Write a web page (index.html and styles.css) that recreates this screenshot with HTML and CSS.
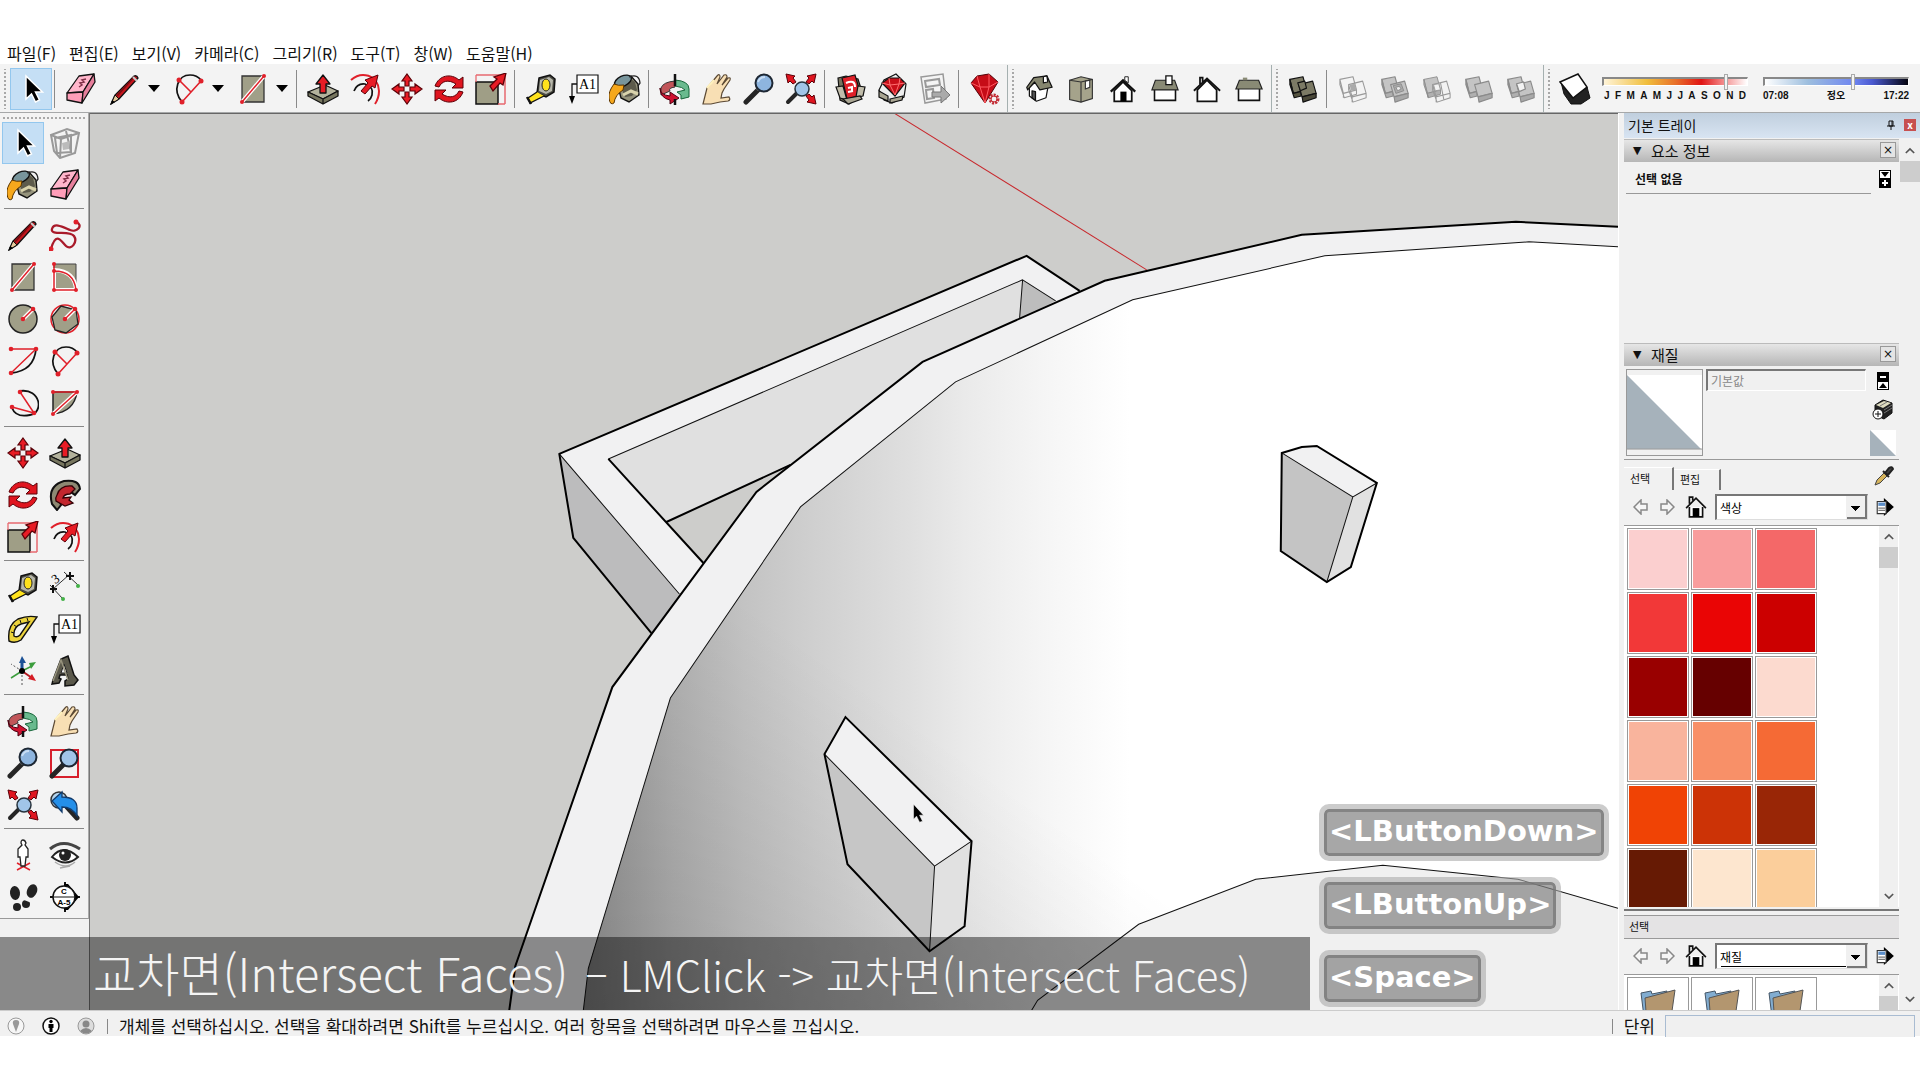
FILE: index.html
```html
<!DOCTYPE html>
<html lang="ko">
<head>
    <meta charset="UTF-8">
    <meta name="viewport" content="width=device-width, initial-scale=1.0">
    <title>SketchUp</title>
    <link rel="stylesheet" href="styles.css">
</head>
<body>
    <!-- icon set -->
    <svg class="sprite" aria-hidden="true">
        <symbol id="i-select" viewBox="0 0 32 32"><path d="M11 3v23l5.500-5 4 8 4-2-4-8h7z" fill="#000" stroke="#fff" stroke-width="1.500"/></symbol>
        <symbol id="i-eraser" viewBox="0 0 32 32"><g stroke="#111" stroke-width="1.300" stroke-linejoin="round"><path d="M2 20 14 3l15-2-11 18z" fill="#ffb6cb"/><path d="m2 20 16-1-1 11-15-3z" fill="#ff9db8"/><path d="m18 19 11-18 1 8-13 21z" fill="#e77f9c"/></g><path d="m14 14 3-2-2-2 4-1-2-2 4-1" fill="none" stroke="#803048" stroke-width="1.500"/></symbol>
        <symbol id="i-pencil" viewBox="0 0 32 32"><path d="M25 3q3-1 4 2L10 26l-8 5 4-9z" fill="#c5161d" stroke="#111" stroke-width="1.300"/><path d="m6 22 4 4-8 5z" fill="#e5c99b" stroke="#111"/><path d="m2 31 1-4 3 2z"/><path d="m8 23 17-19" stroke="#7b0b10" stroke-width="1.500"/><path d="m24 4 4 4" stroke="#ccc" stroke-width="2"/></symbol>
        <symbol id="i-arc2" viewBox="0 0 32 32"><path d="M9 29C-1 17 5 2 17 2q7 0 11 5" fill="none" stroke="#111" stroke-width="1.700"/><path d="M9 29 28 8M6 7l12 12" stroke="#e0202a" stroke-width="1.600"/><g fill="#e0202a"><circle cx="9" cy="29" r="2.500"/><circle cx="28" cy="8" r="2.500"/><circle cx="6" cy="7" r="2.500"/></g></symbol>
        <symbol id="i-rect" viewBox="0 0 32 32"><path d="M5 3h22v26H5z" fill="#a09f88" stroke="#333" stroke-width="1.300"/><path d="M5 29 27 3" stroke="#fff" stroke-width="4"/><path d="M5 29 27 3" stroke="#e0202a" stroke-width="1.500"/><circle cx="5" cy="29" r="2" fill="#e0202a"/><circle cx="27" cy="3" r="2" fill="#e0202a"/></symbol>
        <symbol id="i-push" viewBox="0 0 32 32"><g stroke="#111" stroke-width="1.300" stroke-linejoin="round"><path d="m1 19 17-7 13 6-15 8z" fill="#b3b29c"/><path d="m1 19 15 7v5L1 23zM16 26l15-8v5l-15 8z" fill="#77765f"/><path d="M13 20v-9H9l7-9 7 9h-4v9z" fill="#e81c25"/></g></symbol>
        <symbol id="i-offset" viewBox="0 0 32 32"><path d="M2 7C12-2 29 1 30 18q0 7-4 13" fill="none" stroke="#e0202a" stroke-width="2"/><path d="M5 18q3-8 11-7 9 3 7 11-1 4-4 6" fill="none" stroke="#111" stroke-width="1.700"/><path d="m12 18 7-8-3-3 13-5-3 13-3-2-7 8z" fill="#e81c25" stroke="#5b0007"/></symbol>
        <symbol id="i-move" viewBox="0 0 32 32"><g fill="#e81c25" stroke="#5b0007" stroke-width="1.200"><path id="mv" d="m16 1 5 7h-3v5h-4V8h-3z"/><use href="#mv" transform="rotate(90 16 16)"/><use href="#mv" transform="rotate(180 16 16)"/><use href="#mv" transform="rotate(270 16 16)"/></g></symbol>
        <symbol id="i-rotate" viewBox="0 0 32 32"><g fill="#e0151f" stroke="#5b0007"><path id="rt" d="M2 13C6 2 18 0 26 7l4-3v11H19l4-4C15 6 9 8 6 14z"/><use href="#rt" transform="rotate(180 16 16)"/></g></symbol>
        <symbol id="i-scale" viewBox="0 0 32 32"><path d="M1 2h29v29" fill="none" stroke="#e86a70" stroke-width="1.500"/><path d="M1 9h22v22H1z" fill="#9f9e86" stroke="#111" stroke-width="1.500"/><path d="M1 9V2M23 31h7" stroke="#e86a70" stroke-width="1.300"/><path d="m15 13 7-7-3-2 12-4-3 12-3-2-7 8z" fill="#e81c25" stroke="#5b0007" stroke-width="1.300"/></symbol>
        <symbol id="i-tape" viewBox="0 0 32 32"><path d="m14 5 11-3 5 4-1 13-8 5-9-4z" fill="#4a4a43" stroke="#111" stroke-width="1.500"/><path d="m15 7 9-3 4 3-1 11-6 3-7-3z" fill="#b7b7aa"/><ellipse cx="21" cy="12" rx="4" ry="6" fill="#ffe21c" stroke="#222"/><path d="m12 19-9 6 2 5 14-7" fill="#ffe21c" stroke="#111" stroke-width="1.300"/><path d="m2 24 4 7" stroke="#111" stroke-width="2.500"/></symbol>
        <symbol id="i-text" viewBox="0 0 32 32"><path d="M10 2h21v18H10z" fill="#fff" stroke="#111" stroke-width="1.200"/><text x="20.500" y="16" text-anchor="middle" class="glyph-a1">A1</text><path d="M10 11H5v16" fill="none" stroke="#111" stroke-width="1.300"/><path d="M2 23h6l-3 8z"/></symbol>
        <symbol id="i-paint" viewBox="0 0 32 32"><path d="m8 9 14-6 7 8 1 11-10 7-8-4z" fill="#95937c" stroke="#111" stroke-width="1.400"/><path d="m11 12 10-7 5 4 2 8-5 6-7 1z" fill="#5d5b4c"/><ellipse cx="14" cy="8" rx="9" ry="5" transform="rotate(-25 14 8)" fill="#78959c" stroke="#111" stroke-width="1.400"/><path d="M20 4q10-4 11 6l-2 3" fill="none" stroke="#222" stroke-width="1.300"/><path d="M5 11q-6 8-5 14 1 8 5 5 1-8 9-13l1-5q-6 1-10-1z" fill="#f6a81c" stroke="#5b3500"/><path d="m14 22 8-4 7 3" fill="none" stroke="#d9d3ac" stroke-width="3"/></symbol>
        <symbol id="i-orbit" viewBox="0 0 32 32"><path d="M16 8Q4 9 2 15v7l9-4q-2-3 5-4z" fill="#c15559" stroke="#333"/><path d="M16 7q14 1 14 9v8l-8 2v-4l-4-3 8-2q-2-3-10-4z" fill="#69ba8e" stroke="#17663a"/><path d="M1 15q0 7 10 8v-4l9 6-9 6v-4Q1 25 1 15z" fill="#cf1230" stroke="#4d0010"/><path d="M16 1v12m0 13v6" stroke="#111" stroke-width="2.500"/></symbol>
        <symbol id="i-pan" viewBox="0 0 32 32"><path d="m2 31 4-16L16 3q3-3 3 1l-3 7 7-9q3-1 3 2l-5 8 6-7q3-1 2 2l-6 9-2 4-1 5 8-1q2 3-1 4l-8 1-9 2z" fill="#f8dfb4" stroke="#5b4934" stroke-width="1.200"/><path d="m6 15 7-8" stroke="#fff1bd" stroke-width="2"/></symbol>
        <symbol id="i-zoom" viewBox="0 0 32 32"><path d="M15 17 3 29" stroke="#252525" stroke-width="5" stroke-linecap="round"/><path d="m14 17 3-3" stroke="#777" stroke-width="3"/><circle cx="21" cy="10" r="8.500" fill="#8eb5df" stroke="#1d2733" stroke-width="2"/><path d="M15 9q2-5 7-5" fill="none" stroke="#c8ddf4" stroke-width="2"/></symbol>
        <symbol id="i-extents" viewBox="0 0 32 32"><path d="m12 20-9 9" stroke="#252525" stroke-width="4" stroke-linecap="round"/><circle cx="17" cy="16" r="7" fill="#a1c5e8" stroke="#26323c" stroke-width="1.500"/><g fill="#e0151f" stroke="#5b0007"><path id="ex" d="m1 1 9 2-2 2 3 4-3 2-3-3-2 2z"/><use href="#ex" transform="matrix(-1 0 0 1 32 0)"/><use href="#ex" transform="rotate(180 16 16)"/></g></symbol>
        <symbol id="i-ware" viewBox="0 0 32 32"><g stroke="#111" stroke-width="1.200"><path d="m3 5 8-2 12 3 5 16-14 9-9-4z" fill="#77745f"/><path d="m7 5 13-3 6 20-14 4z" fill="#df2029"/><path d="m1 14 7-1 4 14-7-2zM23 13l7 1-2 9-7 1z" fill="#c1bdab"/><path d="m8 26 17-3 2 3-14 5z" fill="#a9a592"/></g><path d="M11 10q9-4 9 4M13 15l4-1v4m-4 1 5-1" fill="none" stroke="#fff" stroke-width="2"/></symbol>
        <symbol id="i-extware" viewBox="0 0 32 32"><g stroke="#111" stroke-width="1.200"><path d="m2 17 5-10 12-6 10 10-2 13-12 6-8-3z" fill="#eee"/><path d="m2 18 9 5v5l-9-4zM13 26l13-3-1 4-12 3z" fill="#a9a592"/><path d="m5 10 7-5h11l5 5-10 13z" fill="#c90f19"/></g><path d="m5 10 8 2 5 10 4-11 6-1M12 5l1 7 9-1 1-6" fill="none" stroke="#ff6e70"/></symbol>
        <symbol id="i-layout" viewBox="0 0 32 32"><path d="m2 4 22-3 3 25-21 4z" fill="#f4f4f4" stroke="#999" stroke-width="1.500"/><path d="m6 8 14-2 1 6-14 2zM7 17l7-1 1 9-7 1z" fill="none" stroke="#999" stroke-width="2"/><path d="M13 19h9v-6l9 9-9 8v-6h-9z" fill="#aaa" stroke="#777"/></symbol>
        <symbol id="i-ruby" viewBox="0 0 32 32"><path d="m2 10 6-7 12-2 9 8-13 21z" fill="#c60c17" stroke="#520006"/><path d="m2 10 9 4 5 16 4-16 9-5M8 3l3 11 9 0V1" fill="none" stroke="#ff5b62"/><circle cx="25" cy="26" r="4" fill="#f3f3f3" stroke="#c32d35" stroke-width="3" stroke-dasharray="2 1"/><circle cx="25" cy="26" r="3" fill="none" stroke="#c32d35"/></symbol>
        <symbol id="i-iso" viewBox="0 0 32 32"><g stroke="#111" stroke-width="1.400" stroke-linejoin="round"><path d="m5 14 10-9 11 10-2 11-11 4-8-6z" fill="#fff"/><path d="m2 14 8-11 15-2 6 13-14 3-6-9-8 9z" fill="#86866f"/><path d="m8 18 4 1v10l-4-3z" fill="#555"/><path d="m21 2 4-1 1 7-5 1z" fill="#fff"/></g></symbol>
        <symbol id="i-top" viewBox="0 0 32 32"><g stroke="#333" stroke-width="1.300"><path d="m3 6 13-4 13 3v22l-13 4-13-3z" fill="#a5a38b"/><path d="M16 8v23M3 6l13 2 13-3" fill="none"/><path d="m21 7 5-1v8l-5 2z" fill="#fff"/></g></symbol>
        <symbol id="i-front" viewBox="0 0 32 32"><path d="M6 18v12h20V18L16 8z" fill="#fff" stroke="#111" stroke-width="2"/><path d="M2 19 16 6l14 13" fill="none" stroke="#111" stroke-width="2.500"/><path d="M13 19h7v11h-7z"/><path d="M18 2h4v7l-4-3z" fill="#fff" stroke="#111"/></symbol>
        <symbol id="i-right" viewBox="0 0 32 32"><path d="M4 15h24v14H4z" fill="#fff" stroke="#111" stroke-width="1.800"/><path d="m5 6 22 0 4 11H1z" fill="#898a75" stroke="#222" stroke-width="1.300"/><path d="M17 1h7v10h-7z" fill="#fff" stroke="#111" stroke-width="1.500"/></symbol>
        <symbol id="i-back" viewBox="0 0 32 32"><path d="M5 17v13h22V17L16 6z" fill="#fff" stroke="#111" stroke-width="2"/><path d="M1 18 16 4l15 14M8 11V3h3v5" fill="none" stroke="#111" stroke-width="2"/></symbol>
        <symbol id="i-left" viewBox="0 0 32 32"><path d="M4 15h24v14H4z" fill="#fff" stroke="#111" stroke-width="1.800"/><path d="m5 6 22 0 4 10H1z" fill="#898a75" stroke="#222" stroke-width="1.300"/><path d="M9 3h5v3H9z" fill="#898a75"/></symbol>
        <symbol id="i-shell" viewBox="0 0 32 32"><g fill="#7c7a65" stroke="#111" stroke-width="1.300" stroke-linejoin="round"><path d="m1 5 15-3 4 15-15 4z"/><path d="m5 21 8-2 1 5-8 2-5-15V5z" fill="#55533f"/><path d="m11 11 16-4 4 14-16 4z"/><path d="m15 25 16-4v5l-15 5z" fill="#4a4838"/><path d="m10 9 8-2 2 8-7 3z"/></g></symbol>
        <symbol id="i-solid" viewBox="0 0 32 32"><g fill="#c4c4c4" stroke="#8b8b8b" stroke-width="1.300" stroke-linejoin="round"><path d="m1 5 15-3 4 15-15 4z"/><path d="m5 21 8-2 1 5-8 2-5-15V5z" fill="#b0b0b0"/><path d="m11 11 16-4 4 14-16 4z"/><path d="m15 25 16-4v5l-15 5z" fill="#a8a8a8"/></g></symbol>
        <symbol id="i-union" viewBox="0 0 32 32"><use href="#i-solid"/><path d="m14 12 9-2 3 8-9 3z" fill="#aaa" stroke="#888"/><path d="m17 14 4-1 2 3-4 2z" fill="#eee" stroke="#888"/></symbol>
        <symbol id="i-split" viewBox="0 0 32 32"><use href="#i-solid"/><path d="m11 10 8-2 2 8-7 3z" fill="#f3f3f3" stroke="#888" stroke-width="1.300"/></symbol>
        <symbol id="i-wire" viewBox="0 0 32 32"><g fill="none" stroke="#999" stroke-width="1.200" stroke-linejoin="round"><path d="m1 5 15-3 4 15-15 4zM1 5v6l5 15 14-4v-5M5 21v5"/><path d="m11 11 16-4 4 14-16 4zM11 11v6l5 14 15-5v-5M15 25v6"/></g><path d="m12 11 6-1 2 7-6 1z" fill="#aaa"/></symbol>
        <symbol id="i-cut" viewBox="0 0 32 32"><path d="m1 5 15-3 4 15-15 4z" fill="#c4c4c4" stroke="#8b8b8b"/><path d="m1 5 4 16 1 5-5-15zM6 26l14-4v-5L5 21z" fill="#b0b0b0" stroke="#8b8b8b"/><path d="m11 11 16-4 4 14-16 4zM11 11v6l5 14 15-5v-5M15 25v6M20 9l4 20" fill="none" stroke="#999" stroke-width="1.200"/><path d="m12 11 6-1 2 7-6 1z" fill="#f3f3f3" stroke="#999"/></symbol>
        <symbol id="i-shadow" viewBox="0 0 32 32"><path d="m2 9 3 12 7 10h10l9-6-3-11-17-6z" fill="#222" stroke="#111"/><path d="m1 9 18-8 9 13-14 11z" fill="#fff" stroke="#111" stroke-width="1.500"/></symbol>
        <symbol id="i-component" viewBox="0 0 32 32"><g fill="none" stroke="#999" stroke-width="2"><path d="m2 8 16-6 12 4-4 20-15 5-6-7z"/><path d="m2 8 10 4 18-6M12 12l-1 19M6 11l16-3 0 17-14 1zM17 4l5 21"/></g><path d="m13 16 8-2-1 8-6 1z" fill="#bbb"/></symbol>
        <symbol id="i-free" viewBox="0 0 32 32"><path d="M27 3c8 3 1 11-6 8S5 3 3 10s18 1 22 7-3 15-8 10S7 12 2 30" fill="none" stroke="#a91b2a" stroke-width="2.300"/><circle cx="27" cy="3" r="2.500" fill="#e0202a"/><circle cx="2" cy="30" r="2.500" fill="#e0202a"/></symbol>
        <symbol id="i-rrect" viewBox="0 0 32 32"><path d="M5 3h22v26H5z" fill="#a09f88" stroke="#444"/><path d="M5 9q21 1 22 20H5z" fill="none" stroke="#fff" stroke-width="4"/><path d="M5 3v26h22Q25 10 5 10" fill="none" stroke="#e0202a" stroke-width="1.500"/><g fill="#e0202a"><circle cx="5" cy="3" r="2"/><circle cx="5" cy="10" r="2"/><circle cx="5" cy="29" r="2"/><circle cx="27" cy="29" r="2"/></g></symbol>
        <symbol id="i-circle" viewBox="0 0 32 32"><circle cx="16" cy="16" r="14" fill="#a09f88" stroke="#222" stroke-width="1.500"/><path d="M16 16 26 6" stroke="#fff" stroke-width="4"/><path d="M16 16 26 6" stroke="#e0202a" stroke-width="1.500"/><circle cx="16" cy="16" r="2.300" fill="#e0202a"/><circle cx="26" cy="6" r="2.300" fill="#e0202a"/></symbol>
        <symbol id="i-poly" viewBox="0 0 32 32"><circle cx="16" cy="16" r="14" fill="none" stroke="#e0202a" stroke-width="1.500"/><path d="M3 14 12 3l15 4 2 14-12 9-11-3z" fill="#a09f88" stroke="#222" stroke-width="1.300"/><path d="M16 16 26 6" stroke="#fff" stroke-width="4"/><path d="M16 16 26 6" stroke="#e0202a" stroke-width="1.500"/><circle cx="16" cy="16" r="2.300" fill="#e0202a"/><circle cx="26" cy="6" r="2.300" fill="#e0202a"/></symbol>
        <symbol id="i-arc1" viewBox="0 0 32 32"><path d="M29 4q-2 22-25 24" fill="none" stroke="#111" stroke-width="1.800"/><path d="M4 4h25L4 28" fill="none" stroke="#e0202a" stroke-width="1.500"/><g fill="#e0202a"><circle cx="4" cy="4" r="2.300"/><circle cx="29" cy="4" r="2.300"/><circle cx="4" cy="28" r="2.300"/></g></symbol>
        <symbol id="i-arc3" viewBox="0 0 32 32"><path d="M13 4c21-3 24 22 10 24Q9 31 5 21" fill="none" stroke="#111" stroke-width="1.800"/><path d="m13 5 14 21-22-6" fill="none" stroke="#e0202a" stroke-width="1.500"/><g fill="#e0202a"><circle cx="13" cy="5" r="2.300"/><circle cx="27" cy="26" r="2.300"/><circle cx="5" cy="20" r="2.300"/></g></symbol>
        <symbol id="i-pie" viewBox="0 0 32 32"><path d="M4 5h24q-3 20-24 22z" fill="#a09f88" stroke="#222" stroke-width="1.500"/><path d="m4 27 24-22" stroke="#fff" stroke-width="4"/><path d="m4 27 24-22H4" fill="none" stroke="#e0202a" stroke-width="1.500"/><g fill="#e0202a"><circle cx="4" cy="5" r="2"/><circle cx="28" cy="5" r="2"/><circle cx="4" cy="27" r="2"/></g></symbol>
        <symbol id="i-follow" viewBox="0 0 32 32"><path d="M3 25Q-2 7 15 2q15-2 16 8l-5 6q-5-5-11-2-6 4-3 12l-4 5z" fill="#8d8973" stroke="#111" stroke-width="2"/><path d="M8 16Q11 6 23 7l3 3-5 5q-6 0-7 4l8-1-2 3 4 3-8 3-9-5q-1-3 1-6z" fill="#c3262e" stroke="#330005" stroke-width="1.300"/></symbol>
        <symbol id="i-dim" viewBox="0 0 32 32"><path d="m4 18 17-15M1 14l13 14M15 1l14 13" stroke="#333"/><path d="m1 18 7 0M4 14v8M17 5h8M21 1v8" stroke="#111" stroke-width="2"/><circle cx="14" cy="28" r="2" fill="#43b247"/><circle cx="29" cy="15" r="2" fill="#43b247"/><text x="3" y="11" transform="rotate(-35 8 7)" class="glyph-3">3</text></symbol>
        <symbol id="i-protractor" viewBox="0 0 32 32"><path fill-rule="evenodd" d="M2 28Q0 12 11 6q10-4 19-2L14 27Q8 31 2 28zM7 23q-1-9 7-12l8-2-9 13q-3 3-6 1z" fill="#ecd33c" stroke="#111" stroke-width="1.400"/><path d="M4 19l3 1M7 12l3 2M13 7l1 3M20 5l1 3" stroke="#111"/></symbol>
        <symbol id="i-axes" viewBox="0 0 32 32"><path d="M15 16v14M15 16 4 9" stroke="#555" stroke-dasharray="2 2"/><path d="M15 16V6" stroke="#1b5196" stroke-width="3"/><path d="m12 8 3-7 4 7z" fill="#1b5196"/><path d="m15 16 10-5M15 16 4 23" stroke="#3b9d3d" stroke-width="1.500"/><path d="m22 8 7-1-5 7z" fill="#3b9d3d"/><path d="m15 16 10 7" stroke="#b51922" stroke-width="2"/><path d="m25 19 4 7-8-2z" fill="#d51c24"/><circle cx="15" cy="16" r="3"/></symbol>
        <symbol id="i-3dtext" viewBox="0 0 32 32"><path d="M4 25 12 4l7-3 6 19 4 5-4 5-9 1v-5l3-2-1-4h-7l-1 3 2 1-2 4-7 1z" fill="#5a584b" stroke="#111" stroke-width="1.500"/><path d="m12 18 3-9 3 9z" fill="#eee" stroke="#222"/><path d="m4 26 8-21 7 20" fill="none" stroke="#98947e" stroke-width="1.500"/></symbol>
        <symbol id="i-zoomwin" viewBox="0 0 32 32"><path d="M2 3h27v27H2z" fill="none" stroke="#d7202c" stroke-width="2"/><path d="M15 17 3 29" stroke="#252525" stroke-width="5" stroke-linecap="round"/><circle cx="20" cy="11" r="8.500" fill="#a1c5e8" stroke="#1d2733" stroke-width="2"/></symbol>
        <symbol id="i-prev" viewBox="0 0 32 32"><path d="m18 18 10 11" stroke="#252525" stroke-width="5" stroke-linecap="round"/><circle cx="10" cy="11" r="8" fill="#b5d5ee" stroke="#333" stroke-width="1.500"/><path d="m3 12 10-9v5q15 0 15 11v8q-5-9-15-9v5z" fill="#248fe9" stroke="#123b6c" stroke-width="1.300"/></symbol>
        <symbol id="i-camera" viewBox="0 0 32 32"><path d="m10 24 13 7M23 24 10 31" stroke="#e0202a" stroke-width="1.500"/><path d="M14 4q0-3 2-3t3 3l-1 2 3 4v8h-2l-1 9h-4l-1-9h-2v-8l4-4z" fill="#fff" stroke="#222" stroke-width="1.300"/></symbol>
        <symbol id="i-look" viewBox="0 0 32 32"><path d="M1 10Q14-1 31 10" fill="none" stroke="#444" stroke-width="3"/><path d="M3 18Q14 4 29 18q-12 11-26 0z" fill="#fff" stroke="#222" stroke-width="2"/><circle cx="16" cy="16" r="6" fill="#222"/><circle cx="14" cy="14" r="1.500" fill="#fff"/><path d="M6 23q11 8 20 0M11 29l10-2" fill="none" stroke="#aaa" stroke-width="1.500"/></symbol>
        <symbol id="i-walk" viewBox="0 0 32 32"><g fill="#222"><ellipse cx="8" cy="12" rx="5" ry="7" transform="rotate(-6 8 12)"/><ellipse cx="10" cy="26" rx="4" ry="4"/><ellipse cx="25" cy="10" rx="5" ry="7" transform="rotate(22 25 10)"/><ellipse cx="19" cy="23" rx="4" ry="4"/></g><path d="m4 20 11 1M15 17l10 4" stroke="#f3f3f3" stroke-width="2"/></symbol>
        <symbol id="i-section" viewBox="0 0 32 32"><path d="M16 1v4M16 27v4M1 16h30" stroke="#111" stroke-width="2"/><path d="M15 3h4l11 13-11 13h-4z"/><circle cx="15" cy="16" r="11" fill="#fff" stroke="#111" stroke-width="1.500"/><path d="M4 16h22" stroke="#111"/><text x="15" y="13" text-anchor="middle" class="glyph-s">C</text><text x="15" y="24" text-anchor="middle" class="glyph-s">A-5</text></symbol>
        <symbol id="i-prevnav" viewBox="0 0 16 16"><path d="m1 8 7-7v4h6v6H8v4z" fill="#f6f6f6" stroke="#888" stroke-width="1.500"/></symbol>
        <symbol id="i-home" viewBox="0 0 20 20"><path d="M4 10v9h12v-9" fill="#fff" stroke="#111" stroke-width="1.500"/><path d="m1 11 9-9 9 9M4 7V1h3v3" fill="none" stroke="#111" stroke-width="1.500"/><path d="M7 11h6v8H7z"/></symbol>
        <symbol id="i-detail" viewBox="0 0 16 18"><path d="m7 1 9 8-9 8z"/><path d="M1 4h8v11H1z" fill="#fff" stroke="#333"/><path d="M2 5h6v3H2z" fill="#5b8ec9"/><path d="M2 10h6M2 12h6" stroke="#777"/></symbol>
        <symbol id="i-up" viewBox="0 0 12 8"><path d="m1 7 5-5 5 5" fill="none" stroke="#555" stroke-width="2"/></symbol>
        <symbol id="i-folder" viewBox="0 0 36 36"><path d="m1 4 10-2 1 3 15-3-4 34H5z" fill="#82add1" stroke="#456"/><path d="m5 9 30-8-5 35H7z" fill="#b3966f" stroke="#555"/></symbol>
    </svg>

    <div class="app">
        <nav class="menubar">
            <button>파일(F)</button>
            <button>편집(E)</button>
            <button>보기(V)</button>
            <button>카메라(C)</button>
            <button>그리기(R)</button>
            <button>도구(T)</button>
            <button>창(W)</button>
            <button>도움말(H)</button>
        </nav>

        <header class="toolbars">
            <div class="bar">
                <span class="grip"></span>
                <button class="tool active" aria-label="선택"><svg><use href="#i-select"/></svg></button>
                <span class="sep"></span>
                <button class="tool" aria-label="지우개"><svg><use href="#i-eraser"/></svg></button>
                <button class="tool drop" aria-label="선"><svg><use href="#i-pencil"/></svg></button>
                <button class="tool drop" aria-label="호"><svg><use href="#i-arc2"/></svg></button>
                <button class="tool drop" aria-label="직사각형"><svg><use href="#i-rect"/></svg></button>
                <span class="sep"></span>
                <button class="tool" aria-label="밀기/끌기"><svg><use href="#i-push"/></svg></button>
                <button class="tool" aria-label="오프셋"><svg><use href="#i-offset"/></svg></button>
                <button class="tool" aria-label="이동"><svg><use href="#i-move"/></svg></button>
                <button class="tool" aria-label="회전"><svg><use href="#i-rotate"/></svg></button>
                <button class="tool" aria-label="배율"><svg><use href="#i-scale"/></svg></button>
                <span class="sep"></span>
                <button class="tool" aria-label="줄자"><svg><use href="#i-tape"/></svg></button>
                <button class="tool" aria-label="텍스트"><svg><use href="#i-text"/></svg></button>
                <button class="tool" aria-label="페인트통"><svg><use href="#i-paint"/></svg></button>
                <span class="sep"></span>
                <button class="tool" aria-label="궤도"><svg><use href="#i-orbit"/></svg></button>
                <button class="tool" aria-label="이동 보기"><svg><use href="#i-pan"/></svg></button>
                <button class="tool" aria-label="확대/축소"><svg><use href="#i-zoom"/></svg></button>
                <button class="tool" aria-label="범위 확대"><svg><use href="#i-extents"/></svg></button>
                <span class="sep"></span>
                <button class="tool" aria-label="3D Warehouse"><svg><use href="#i-ware"/></svg></button>
                <button class="tool" aria-label="Extension Warehouse"><svg><use href="#i-extware"/></svg></button>
                <button class="tool" aria-label="LayOut"><svg><use href="#i-layout"/></svg></button>
                <span class="sep"></span>
                <button class="tool" aria-label="확장 관리자"><svg><use href="#i-ruby"/></svg></button>
            </div>
            <div class="bar views">
                <span class="grip"></span>
                <button class="tool" aria-label="등각"><svg><use href="#i-iso"/></svg></button>
                <button class="tool" aria-label="상단"><svg><use href="#i-top"/></svg></button>
                <button class="tool" aria-label="전면"><svg><use href="#i-front"/></svg></button>
                <button class="tool" aria-label="오른쪽"><svg><use href="#i-right"/></svg></button>
                <button class="tool" aria-label="후면"><svg><use href="#i-back"/></svg></button>
                <button class="tool" aria-label="왼쪽"><svg><use href="#i-left"/></svg></button>
            </div>
            <div class="bar solids">
                <span class="grip"></span>
                <button class="tool" aria-label="외부 쉘"><svg><use href="#i-shell"/></svg></button>
                <span class="sep"></span>
                <button class="tool" aria-label="교차"><svg><use href="#i-wire"/></svg></button>
                <button class="tool" aria-label="통합"><svg><use href="#i-union"/></svg></button>
                <button class="tool" aria-label="빼기"><svg><use href="#i-cut"/></svg></button>
                <button class="tool" aria-label="트리밍"><svg><use href="#i-solid"/></svg></button>
                <button class="tool" aria-label="분할"><svg><use href="#i-split"/></svg></button>
            </div>
            <div class="bar shadows">
                <span class="grip"></span>
                <button class="tool" aria-label="그림자"><svg><use href="#i-shadow"/></svg></button>
                <div class="slider">
                    <input class="range months" type="range" min="0" max="100" value="86" aria-label="날짜">
                    <div class="ticks month-ticks">
                        <span>J</span><span>F</span><span>M</span><span>A</span><span>M</span><span>J</span>
                        <span>J</span><span>A</span><span>S</span><span>O</span><span>N</span><span>D</span>
                    </div>
                </div>
                <div class="slider">
                    <input class="range hours" type="range" min="0" max="100" value="62" aria-label="시간">
                    <div class="ticks"><span>07:08</span><span>정오</span><span>17:22</span></div>
                </div>
            </div>
        </header>

        <main class="workspace">
            <aside class="palette-area">
                <div class="palette">
                    <span class="grip-h"></span>
                    <div class="tool-grid">
                        <button class="tool active" aria-label="선택"><svg><use href="#i-select"/></svg></button>
                        <button class="tool" aria-label="구성요소 만들기"><svg><use href="#i-component"/></svg></button>
                        <button class="tool" aria-label="페인트통"><svg><use href="#i-paint"/></svg></button>
                        <button class="tool" aria-label="지우개"><svg><use href="#i-eraser"/></svg></button>
                    </div>
                    <hr>
                    <div class="tool-grid">
                        <button class="tool" aria-label="선"><svg><use href="#i-pencil"/></svg></button>
                        <button class="tool" aria-label="자유형"><svg><use href="#i-free"/></svg></button>
                        <button class="tool" aria-label="직사각형"><svg><use href="#i-rect"/></svg></button>
                        <button class="tool" aria-label="회전된 직사각형"><svg><use href="#i-rrect"/></svg></button>
                        <button class="tool" aria-label="원"><svg><use href="#i-circle"/></svg></button>
                        <button class="tool" aria-label="다각형"><svg><use href="#i-poly"/></svg></button>
                        <button class="tool" aria-label="호"><svg><use href="#i-arc1"/></svg></button>
                        <button class="tool" aria-label="2점 호"><svg><use href="#i-arc2"/></svg></button>
                        <button class="tool" aria-label="3점 호"><svg><use href="#i-arc3"/></svg></button>
                        <button class="tool" aria-label="파이"><svg><use href="#i-pie"/></svg></button>
                    </div>
                    <hr>
                    <div class="tool-grid">
                        <button class="tool" aria-label="이동"><svg><use href="#i-move"/></svg></button>
                        <button class="tool" aria-label="밀기/끌기"><svg><use href="#i-push"/></svg></button>
                        <button class="tool" aria-label="회전"><svg><use href="#i-rotate"/></svg></button>
                        <button class="tool" aria-label="따라가기"><svg><use href="#i-follow"/></svg></button>
                        <button class="tool" aria-label="배율"><svg><use href="#i-scale"/></svg></button>
                        <button class="tool" aria-label="오프셋"><svg><use href="#i-offset"/></svg></button>
                    </div>
                    <hr>
                    <div class="tool-grid">
                        <button class="tool" aria-label="줄자"><svg><use href="#i-tape"/></svg></button>
                        <button class="tool" aria-label="치수"><svg><use href="#i-dim"/></svg></button>
                        <button class="tool" aria-label="각도기"><svg><use href="#i-protractor"/></svg></button>
                        <button class="tool" aria-label="텍스트"><svg><use href="#i-text"/></svg></button>
                        <button class="tool" aria-label="축"><svg><use href="#i-axes"/></svg></button>
                        <button class="tool" aria-label="3D 텍스트"><svg><use href="#i-3dtext"/></svg></button>
                    </div>
                    <hr>
                    <div class="tool-grid">
                        <button class="tool" aria-label="궤도"><svg><use href="#i-orbit"/></svg></button>
                        <button class="tool" aria-label="이동 보기"><svg><use href="#i-pan"/></svg></button>
                        <button class="tool" aria-label="확대/축소"><svg><use href="#i-zoom"/></svg></button>
                        <button class="tool" aria-label="창 확대"><svg><use href="#i-zoomwin"/></svg></button>
                        <button class="tool" aria-label="범위 확대"><svg><use href="#i-extents"/></svg></button>
                        <button class="tool" aria-label="이전"><svg><use href="#i-prev"/></svg></button>
                    </div>
                    <hr>
                    <div class="tool-grid">
                        <button class="tool" aria-label="카메라 배치"><svg><use href="#i-camera"/></svg></button>
                        <button class="tool" aria-label="둘러보기"><svg><use href="#i-look"/></svg></button>
                        <button class="tool" aria-label="걷기"><svg><use href="#i-walk"/></svg></button>
                        <button class="tool" aria-label="단면"><svg><use href="#i-section"/></svg></button>
                    </div>
                </div>
            </aside>

            <section class="viewport">
                <svg class="model" viewBox="91 114 1527 896" preserveAspectRatio="xMidYMid slice">
                    <defs>
                        <linearGradient id="wall" gradientUnits="userSpaceOnUse" x1="580" y1="0" x2="1130" y2="0">
                            <stop offset="0" stop-color="#939393"/>
                            <stop offset=".17" stop-color="#b2b2b2"/>
                            <stop offset=".3" stop-color="#c3c3c3"/>
                            <stop offset=".41" stop-color="#cecece"/>
                            <stop offset=".6" stop-color="#dfdfdf"/>
                            <stop offset=".7" stop-color="#eaeaea"/>
                            <stop offset=".84" stop-color="#f5f5f5"/>
                            <stop offset="1" stop-color="#fff"/>
                        </linearGradient>
                        <linearGradient id="shade" gradientUnits="userSpaceOnUse" x1="590" y1="1000" x2="830" y2="660">
                            <stop offset="0" stop-color="#000" stop-opacity=".13"/>
                            <stop offset="1" stop-color="#000" stop-opacity="0"/>
                        </linearGradient>
                    </defs>
                    <path d="M894 113 1147 270" stroke="#c8282d" fill="none"/>
                    <!-- box behind the wall -->
                    <g stroke-linejoin="round">
                        <path d="M560 454 1027 256l53 35-400 303z" fill="#f1f1f2"/>
                        <path d="M609 459 1023 280l33 21-265 164-124 57z" fill="#e0e0e0"/>
                        <path d="M1023 280l-3 40 36-19z" fill="#bdbdbd"/>
                        <path d="M667 522 791 465l-87 98z" fill="#cdcdcb"/>
                        <path d="M560 454l14 84 78 95 28-39z" fill="#bcbcbd"/>
                        <g class="thin"><path d="M609 459 1023 280l33 21M1023 280l-3 38M560 454l120 140"/></g>
                        <g class="thick"><path d="M1080 291 1027 256 560 454l14 84 78 95M609 459l95 104M667 522l124-57"/></g>
                    </g>
                    <!-- round wall -->
                    <path d="M510 1010 516 966 613 687 757 492 923 362l182-81 197-46 214-13 102 5v783z" fill="#f1f1f2"/>
                    <path d="M584 1010l5-42 82-270 130-191 155-125 177-82 192-44 204-14 89 5v763z" fill="url(#wall)"/>
                    <path d="M584 1010l5-42 82-270 130-191 155-125 177-82 192-44 204-14 89 5v763z" fill="url(#shade)"/>
                    <path class="thin" d="M584 1010l5-42 82-270 130-191 155-125 177-82 192-44 204-14 89 5"/>
                    <path class="thick" d="M510 1010 516 966 613 687 757 492 923 362l182-81 197-46 214-13 102 5"/>
                    <path d="M1032 1010l6-10 101-76 117-45 127-14 135 14 100 29v102z" fill="#f0f0f0"/>
                    <path class="thin" d="M1032 1010l6-10 101-76 117-45 127-14 135 14 100 29"/>
                    <!-- slabs -->
                    <path d="M1282 453 1302 447 1317 446 1377 483 1353 497z" fill="#f1f1f2"/>
                    <path d="M1282 453 1353 497 1327 582 1281 551z" fill="#c4c4c4"/>
                    <path d="M1353 497 1377 483 1351 567 1327 582z" fill="#e1e1e1"/>
                    <path class="thin" d="M1282 453 1353 497 1377 483M1353 497 1327 582"/>
                    <path class="thick" d="M1282 453 1302 447 1317 446 1377 483 1351 567 1327 582 1281 551z"/>
                    <path d="M846 717 972 841 935 866 825 754z" fill="#f1f1f2"/>
                    <path d="M825 754 935 866 930 951 848 864z" fill="#c6c6c6"/>
                    <path d="M935 866 972 841 965 926 930 951z" fill="#e1e1e1"/>
                    <path class="thin" d="M825 754 935 866 972 841M935 866 930 951"/>
                    <path class="thick" d="M846 717 972 841 965 926 930 951 848 864 825 754z"/>
                    <path d="M914 804v15l3-3 3 6 3-1-3-6h4z" stroke="#fff" stroke-width=".500"/>
                </svg>
                <div class="keys">
                    <kbd>&lt;LButtonDown&gt;</kbd>
                    <kbd>&lt;LButtonUp&gt;</kbd>
                    <kbd>&lt;Space&gt;</kbd>
                </div>
            </section>

            <aside class="tray">
                <div class="tray-title">
                    <span>기본 트레이</span>
                    <button class="pin" aria-label="고정"><svg viewBox="0 0 8 10"><path d="M2 1h4v5H2zM0 6h8M4 6v4M5 1v5" fill="none" stroke="#111"/></svg></button>
                    <button class="close-red" aria-label="닫기">x</button>
                </div>
                <div class="tray-body">
                    <div class="panels">
                        <section class="panel info">
                            <h2><span class="tri">▼</span>요소 정보<button class="close" aria-label="요소 정보 닫기">×</button></h2>
                            <div class="info-body">
                                <p>선택 없음</p>
                                <button class="toggle" aria-label="세부정보"><svg viewBox="0 0 12 18"><path d="M0 0h12v18H0z"/><path d="M1 1h10v7H1z" fill="#fff"/><path d="M2 2h8L6 7zM0 8h12v10H0z"/><path d="M3 13h6M6 10v6" stroke="#fff" stroke-width="2"/></svg></button>
                            </div>
                        </section>
                        <section class="panel materials">
                            <h2><span class="tri">▼</span>재질<button class="close" aria-label="재질 닫기">×</button></h2>
                            <div class="current">
                                <div class="preview"><svg viewBox="0 0 76 86" preserveAspectRatio="none"><path d="M0 5h76v75H0z" fill="#fff"/><path d="M0 5l75 75H0z" fill="#a6b2bb"/><path d="M0 80h76" stroke="#999"/></svg></div>
                                <input class="name" type="text" value="기본값" aria-label="재질 이름" disabled>
                                <div class="actions">
                                    <button aria-label="보조 창"><svg width="12" height="18" viewBox="0 0 12 18"><path d="M0 0h12v18H0z"/><path d="M3 4h6v2H3z" fill="#fff"/><path d="M1 10h10v7H1z" fill="#fff"/><path d="m2 16 4-5 4 5z"/></svg></button>
                                    <button aria-label="재질 만들기"><svg width="22" height="22" viewBox="0 0 22 22"><path d="m3 6 8-5 9 3v10l-8 6-9-4z" fill="#222" stroke="#111"/><path d="m4 6 8-4 7 2-8 5z" fill="#dfdcc0"/><path d="m12 11 8-5M12 14l8-5M8 7l7-4" stroke="#777"/><circle cx="6" cy="15" r="5" fill="#fff" stroke="#111"/><path d="M3 15h6M6 12v6" stroke="#111"/></svg></button>
                                    <button aria-label="기본 재질"><svg width="26" height="26" viewBox="0 0 26 26"><path d="M0 0h26v26H0z" fill="#fff"/><path d="m0 0 26 26H0z" fill="#a6b2bb"/></svg></button>
                                </div>
                            </div>
                            <div class="tabs">
                                <button class="tab on">선택</button>
                                <button class="tab">편집</button>
                                <button class="dropper" aria-label="샘플 페인트"><svg width="20" height="20" viewBox="0 0 20 20"><path d="m1 19 2-5 7-7 3 3-7 7z" fill="#d6b45c" stroke="#444"/><path d="m9 5 6 6M11 7l4-5q3-2 4 1l-5 6z" fill="#444" stroke="#222" stroke-width="2"/></svg></button>
                            </div>
                            <div class="nav">
                                <button aria-label="뒤로"><svg width="16" height="16"><use href="#i-prevnav"/></svg></button>
                                <button class="fwd" aria-label="앞으로"><svg width="16" height="16"><use href="#i-prevnav"/></svg></button>
                                <button aria-label="모델에서"><svg width="22" height="22"><use href="#i-home"/></svg></button>
                                <select aria-label="재질 모음"><option>색상</option></select>
                                <button aria-label="세부정보"><svg width="18" height="20"><use href="#i-detail"/></svg></button>
                            </div>
                            <div class="list colors">
                                <div class="swatches">
                                    <button class="sw c1" aria-label="색상 1"></button><button class="sw c2" aria-label="색상 2"></button><button class="sw c3" aria-label="색상 3"></button>
                                    <button class="sw c4" aria-label="색상 4"></button><button class="sw c5" aria-label="색상 5"></button><button class="sw c6" aria-label="색상 6"></button>
                                    <button class="sw c7" aria-label="색상 7"></button><button class="sw c8" aria-label="색상 8"></button><button class="sw c9" aria-label="색상 9"></button>
                                    <button class="sw c10" aria-label="색상 10"></button><button class="sw c11" aria-label="색상 11"></button><button class="sw c12" aria-label="색상 12"></button>
                                    <button class="sw c13" aria-label="색상 13"></button><button class="sw c14" aria-label="색상 14"></button><button class="sw c15" aria-label="색상 15"></button>
                                    <button class="sw c16" aria-label="색상 16"></button><button class="sw c17" aria-label="색상 17"></button><button class="sw c18" aria-label="색상 18"></button>
                                </div>
                                <div class="scroll">
                                    <svg class="chev"><use href="#i-up"/></svg>
                                    <span class="thumb"></span>
                                    <svg class="chev down"><use href="#i-up"/></svg>
                                </div>
                            </div>
                            <div class="splitter"></div>
                            <div class="subhead">선택</div>
                            <div class="nav">
                                <button aria-label="뒤로"><svg width="16" height="16"><use href="#i-prevnav"/></svg></button>
                                <button class="fwd" aria-label="앞으로"><svg width="16" height="16"><use href="#i-prevnav"/></svg></button>
                                <button aria-label="모델에서"><svg width="22" height="22"><use href="#i-home"/></svg></button>
                                <select class="focus" aria-label="재질 폴더"><option>재질</option></select>
                                <button aria-label="세부정보"><svg width="18" height="20"><use href="#i-detail"/></svg></button>
                            </div>
                            <div class="list folders">
                                <div class="swatches">
                                    <button class="sw" aria-label="폴더 1"><svg><use href="#i-folder"/></svg></button>
                                    <button class="sw" aria-label="폴더 2"><svg><use href="#i-folder"/></svg></button>
                                    <button class="sw" aria-label="폴더 3"><svg><use href="#i-folder"/></svg></button>
                                </div>
                                <div class="scroll">
                                    <svg class="chev"><use href="#i-up"/></svg>
                                    <span class="thumb"></span>
                                </div>
                            </div>
                        </section>
                    </div>
                    <div class="scroll outer">
                        <svg class="chev"><use href="#i-up"/></svg>
                        <span class="thumb"></span>
                        <svg class="chev down"><use href="#i-up"/></svg>
                    </div>
                </div>
            </aside>

            <p class="caption">교차면(Intersect Faces) <small>– LMClick -&gt; 교차면(Intersect Faces)</small></p>
        </main>

        <footer class="status">
            <svg class="badge" viewBox="0 0 18 18"><circle cx="9" cy="9" r="8" fill="#f6f6f6" stroke="#999"/><path d="M9 3q4 0 3 4l-3 8-3-8q-1-4 3-4z" fill="#999"/></svg>
            <svg class="badge" viewBox="0 0 18 18"><circle cx="9" cy="9" r="8" fill="#fff" stroke="#111" stroke-width="1.500"/><circle cx="9" cy="4.500" r="1.700"/><path d="M6.500 7h5v4h-1v4h-3v-4h-1z"/></svg>
            <svg class="badge" viewBox="0 0 18 18"><circle cx="9" cy="9" r="8" fill="#ddd" stroke="#999"/><circle cx="9" cy="7" r="3.500" fill="#888"/><path d="M3 14q6-6 12 0-6 5-12 0z" fill="#888"/></svg>
            <span class="line"></span>
            <span class="hint">개체를 선택하십시오. 선택을 확대하려면 Shift를 누르십시오. 여러 항목을 선택하려면 마우스를 끄십시오.</span>
            <span class="line"></span>
            <label for="measure">단위</label>
            <input id="measure" type="text">
        </footer>
    </div>
</body>
</html>
```
FILE: styles.css
```css
* {
    box-sizing: border-box;
    margin: 0;
    padding: 0;
}
body {
    background: #fff;
    color: #111;
    font-family: "Liberation Sans", "Noto Sans CJK KR", sans-serif;
    font-size: 12px;
}
button {
    border: none;
    background: none;
    font: inherit;
    color: inherit;
}
.sprite {
    display: none;
}
.glyph-a1 {
    font: 14px "Liberation Serif", serif;
}
.glyph-3 {
    font: 13px "Liberation Serif", serif;
}
.glyph-s {
    font: bold 8px "Liberation Sans", sans-serif;
}
.app {
    height: 100vh;
    padding: 41px 0 44px;
    display: grid;
    grid-template-rows: auto auto 1fr auto;
}

/* menu */
.menubar {
    display: flex;
    gap: 13px;
    height: 23px;
    padding-left: 7px;
    font-family: "Noto Sans CJK KR", sans-serif;
    font-size: 16px;
    line-height: 22px;
}

/* top toolbars */
.toolbars {
    display: flex;
    height: 49px;
    padding-top: 1px;
    background: #f3f3f3;
    border-bottom: 1px solid #a6a8a9;
}
.bar {
    display: flex;
    align-items: center;
    padding-right: 1px;
    border-right: 1px solid #a5b0b0;
}
.grip {
    width: 10px;
    height: 40px;
    background: radial-gradient(circle, #a8a8a8 1px, transparent 1px) center / 4px 4px repeat-y;
}
.sep {
    width: 8px;
    height: 38px;
    background: linear-gradient(#8a8a8a, #8a8a8a) 2px 0 / 1px 100% no-repeat;
}
.tool {
    width: 42px;
    height: 42px;
    display: flex;
    align-items: center;
    justify-content: center;
}
.tool svg {
    width: 32px;
    height: 32px;
}
.tool.active {
    background: #c5dff5;
    border: 1px solid #93c7ee;
}
.solids .tool svg, .views .tool svg {
    width: 28px;
    height: 28px;
}
.tool.drop {
    width: 64px;
    gap: 7px;
}
.tool.drop::after {
    content: "";
    border: 6px solid transparent;
    border-top: 7px solid #000;
    border-bottom: none;
}
.shadows {
    flex: 1;
    border-right: none;
}
.slider {
    flex: 1;
    padding: 3px 9px 0 6px;
    max-width: 161px;
}
.range {
    appearance: none;
    display: block;
    width: 100%;
    height: 9px;
    border: 1px solid #fff;
    border-top: 2px solid #888;
    border-left: 2px solid #888;
}
.range::-webkit-slider-thumb {
    appearance: none;
    width: 4px;
    height: 16px;
    background: #f4f4f4;
    border: 1px solid #aaa;
}
.months {
    background: linear-gradient(90deg, #fff4d8, #f0be3c 30%, #e8702a 50%, #e01414 68%, #f28080 82%, #fff);
}
.hours {
    background: linear-gradient(90deg, #fff, #9dbede 30%, #6f86f0 62%, #4a59d0 75%, #050510);
}
.ticks {
    display: flex;
    justify-content: space-between;
    padding-top: 3px;
    font-size: 10px;
    line-height: 14px;
    font-weight: bold;
}
.month-ticks {
    padding-left: 2px;
    padding-right: 2px;
}

/* workspace */
.workspace {
    position: relative;
    display: grid;
    grid-template-columns: 90px 1fr 302px;
    min-height: 0;
    overflow: hidden;
    background: #f1f1f1;
}
.palette-area {
    border-right: 1px solid #777;
}
.palette {
    background: #f3f3f3;
    padding: 1px 2px 0;
    border-right: 1px solid #aaa;
    border-bottom: 1px solid #999;
}
.grip-h {
    display: block;
    height: 8px;
    background: radial-gradient(circle, #a8a8a8 1px, transparent 1px) center / 4px 4px repeat-x;
}
.tool-grid {
    display: grid;
    grid-template-columns: 42px 42px;
}
.palette hr {
    height: 1px;
    margin: 2px 2px 5px;
    border: none;
    background: #888;
}
.viewport {
    position: relative;
    background: #cdcdcb;
    border-top: 1px solid #666;
    overflow: hidden;
}
.model {
    display: block;
    width: 100%;
    height: 100%;
}
.thin {
    fill: none;
    stroke: #111;
    stroke-width: 1;
}
.thick {
    fill: none;
    stroke: #000;
    stroke-width: 2;
}
.keys {
    position: absolute;
    right: 10px;
    bottom: 3px;
    width: 289px;
    display: flex;
    flex-direction: column;
    align-items: flex-start;
    gap: 16px;
}
.keys kbd {
    padding: 0 2px 3px;
    border: 3px solid rgba(120, 120, 120, 0.75);
    border-radius: 5px;
    outline: 5px solid rgba(170, 170, 170, 0.6);
    margin: 5px;
    background: rgba(130, 130, 130, 0.7);
    color: #fff;
    font-family: "DejaVu Sans", sans-serif;
    font-weight: bold;
    font-size: 29px;
    line-height: 38px;
}
.caption {
    position: absolute;
    left: 0;
    bottom: 0;
    width: calc(100% - 610px);
    height: 73px;
    padding-left: 93px;
    background: rgba(0, 0, 0, 0.43);
    color: #f4f4f4;
    font-family: "Noto Sans CJK KR", sans-serif;
    font-weight: 300;
    font-size: 47px;
    line-height: 69px;
    white-space: nowrap;
}
.caption small {
    padding-left: 4px;
    font-size: 42px;
}

/* tray */
.tray {
    display: flex;
    flex-direction: column;
    min-height: 0;
    padding-left: 5px;
    border-left: 1px solid #fff;
    font-family: "Noto Sans CJK KR", sans-serif;
}
.tray-title {
    display: flex;
    align-items: center;
    gap: 9px;
    height: 25px;
    padding: 0 4px 2px;
    background: linear-gradient(#c0cfde, #d8e4f2);
    font-size: 14px;
}
.tray-title span {
    flex: 1;
}
.pin svg {
    display: block;
    width: 8px;
    height: 10px;
}
.close-red {
    width: 12px;
    height: 12px;
    background: #c75050;
    color: #fff;
    font-size: 10px;
    line-height: 10px;
    font-weight: bold;
}
.tray-body {
    flex: 1;
    min-height: 0;
    display: flex;
}
.panels {
    flex: 1;
    min-width: 0;
    display: flex;
    flex-direction: column;
    padding-top: 1px;
}
.panel h2 {
    display: flex;
    align-items: center;
    height: 23px;
    padding: 0 3px 2px 9px;
    border-top: 1px solid #bbb;
    background: linear-gradient(#e6e6e6, #b6b6b6);
    font-size: 15px;
    font-weight: normal;
}
.tri {
    width: 18px;
    font-family: "DejaVu Sans", sans-serif;
    font-size: 11px;
}
.close {
    width: 16px;
    height: 16px;
    margin-left: auto;
    border: 1px solid #999;
    background: #e4e4e4;
    font-family: "DejaVu Sans", sans-serif;
    font-size: 12px;
    line-height: 12px;
}
.info {
    height: 204px;
}
.info-body {
    display: flex;
    justify-content: space-between;
    padding: 8px 8px 0 2px;
}
.info-body p {
    width: 245px;
    height: 24px;
    padding-left: 9px;
    border-bottom: 1px solid #999;
    font-weight: bold;
    line-height: 18px;
}
.toggle {
    align-self: flex-start;
}
.toggle svg {
    display: block;
    width: 12px;
    height: 18px;
}
.materials {
    flex: 1;
    min-height: 0;
    display: flex;
    flex-direction: column;
}
.materials h2 {
    flex: none;
}
.current {
    display: flex;
    gap: 3px;
    padding: 3px 2px 3px;
    border-bottom: 1px solid #999;
}
.preview {
    width: 77px;
    height: 87px;
    border: 1px solid #999;
}
.preview svg {
    display: block;
    width: 100%;
    height: 100%;
}
.name {
    width: 160px;
    height: 22px;
    padding-left: 3px;
    border: 1px solid #fff;
    border-top: 2px solid #777;
    border-left: 2px solid #777;
    background: #f0f0f0;
    color: #888;
    font: 12px "Noto Sans CJK KR", sans-serif;
}
.actions {
    flex: 1;
    display: flex;
    flex-direction: column;
    align-items: center;
    justify-content: space-between;
    padding-top: 3px;
}
.actions svg, .nav svg, .dropper svg {
    display: block;
}
.tabs {
    display: flex;
    align-items: flex-end;
    height: 30px;
}
.tab {
    width: 47px;
    height: 21px;
    border-top: 1px solid #fff;
    border-right: 2px solid #777;
    text-align: left;
    padding: 0 0 2px 6px;
    line-height: 18px;
    font-size: 11px;
}
.tab.on {
    width: 50px;
    height: 23px;
}
.dropper {
    margin: 0 5px 4px auto;
}
.nav {
    display: flex;
    flex: none;
    align-items: center;
    gap: 8px;
    height: 36px;
    padding: 0 5px 1px 9px;
    border-bottom: 1px solid #999;
}
.nav .fwd svg {
    transform: scaleX(-1);
}
.nav .fwd {
    padding: 0 2px;
}
.nav select {
    appearance: none;
    flex: 1;
    height: 26px;
    padding-left: 3px;
    border: 1px solid #ddd;
    border-top: 2px solid #777;
    border-left: 2px solid #777;
    border-radius: 0;
    background: conic-gradient(from -45deg at 50% 100%, #000 90deg, transparent 0) right 7px top 10px / 9px 5px no-repeat, linear-gradient(#777, #777) right 0 top 0 / 2px 100% no-repeat, linear-gradient(#777, #777) right 0 bottom 0 / 20px 2px no-repeat, linear-gradient(#f0f0f0, #f0f0f0) right 1px top 0 / 20px 100% no-repeat, #fff;
    font: 12px "Noto Sans CJK KR", sans-serif;
}
.nav select.focus {
    background: conic-gradient(from -45deg at 50% 100%, #000 90deg, transparent 0) right 7px top 10px / 9px 5px no-repeat, linear-gradient(#777, #777) right 0 top 0 / 2px 100% no-repeat, linear-gradient(#777, #777) right 0 bottom 0 / 20px 2px no-repeat, linear-gradient(#f0f0f0, #f0f0f0) right 1px top 0 / 20px 100% no-repeat, linear-gradient(#000, #000) 4px 21px / 125px 1px no-repeat, #fff;
}
.list {
    display: flex;
    min-height: 0;
    overflow: hidden;
    background: #fff;
}
.colors {
    flex: 1;
}
.folders {
    flex: none;
    height: 35px;
}
.swatches {
    flex: 1;
    display: grid;
    grid-template-columns: repeat(3, 62px);
    grid-auto-rows: 62px;
    gap: 2px;
    padding: 2px 3px;
}
.sw {
    border: 1px solid #999;
    box-shadow: inset 0 0 0 1px #fff;
}
.sw svg {
    width: 36px;
    height: 36px;
}
.c1 { background: #fbcfcf; }
.c2 { background: #f99d9d; }
.c3 { background: #f46868; }
.c4 { background: #f23838; }
.c5 { background: #ea0505; }
.c6 { background: #cc0000; }
.c7 { background: #990000; }
.c8 { background: #660000; }
.c9 { background: #fcdacf; }
.c10 { background: #f9b49d; }
.c11 { background: #f89068; }
.c12 { background: #f56a35; }
.c13 { background: #f04305; }
.c14 { background: #cc3306; }
.c15 { background: #992606; }
.c16 { background: #661a04; }
.c17 { background: #fde6cf; }
.c18 { background: #fbce9b; }
.scroll {
    width: 19px;
    margin-right: 1px;
    display: flex;
    flex-direction: column;
    align-items: center;
    background: #f0f0f0;
}
.chev {
    flex: none;
    width: 10px;
    height: 7px;
    margin: 7px 0;
}
.chev.down {
    margin-top: auto;
    transform: scaleY(-1);
}
.thumb {
    width: 100%;
    height: 21px;
    background: #cdcdcd;
}
.outer {
    width: 20px;
    margin: 2px 0 0 1px;
}
.splitter {
    flex: none;
    height: 7px;
    border-top: 2px solid #777;
    border-bottom: 1px solid #999;
    margin-top: 2px;
}
.subhead {
    flex: none;
    height: 23px;
    padding-left: 5px;
    border-bottom: 1px solid #999;
    background: #e4e3e4;
    font-size: 11px;
    line-height: 21px;
}

/* status bar */
.status {
    display: flex;
    align-items: center;
    height: 26px;
    padding: 5px 5px 0 7px;
    border-top: 1px solid #ccc;
    background: #f1f1f1;
    font-family: "Noto Sans CJK KR", sans-serif;
    font-size: 17px;
    line-height: 20px;
}
.badge {
    width: 18px;
    height: 18px;
    margin-right: 17px;
}
.line {
    width: 1px;
    height: 15px;
    margin-right: 11px;
    background: #888;
}
.badge + .line {
    margin-left: -5px;
}
.hint {
    flex: 1;
    white-space: nowrap;
}
.status input {
    width: 250px;
    height: 22px;
    margin-left: 10px;
    border: 1px solid #a9bcd2;
    border-bottom: none;
    background: #f0f0f0;
}
```
